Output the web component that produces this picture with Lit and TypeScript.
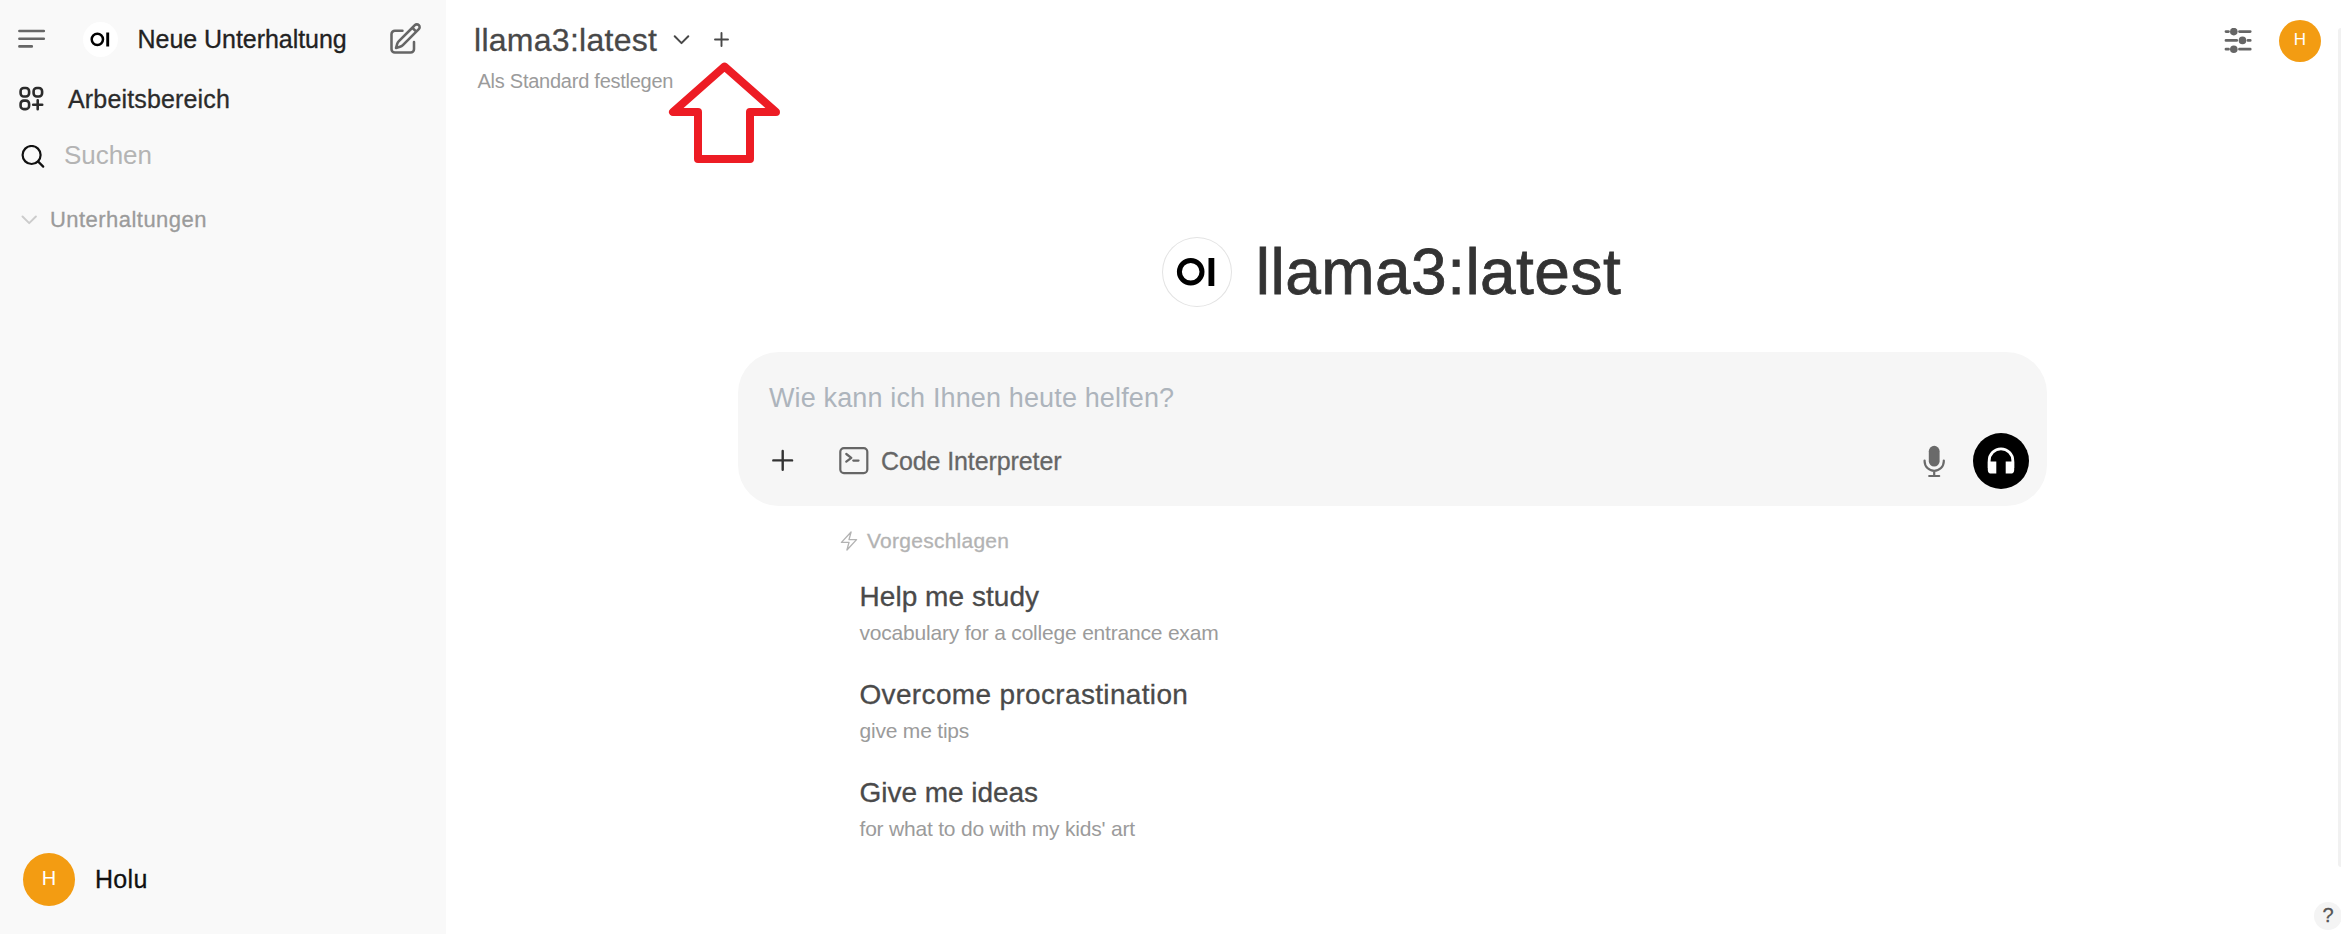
import { LitElement, html, css, svg } from "lit";
import { customElement } from "lit/decorators.js";

const shared = css`
  * { box-sizing: border-box; }
  svg { display: block; flex: none; fill: none; stroke: currentColor; stroke-linecap: round; stroke-linejoin: round; }
  .medium { -webkit-text-stroke: 0.3px currentColor; }
  .avatar { display: flex; align-items: center; justify-content: center; flex: none; border-radius: 50%; background: #f39c12; color: #fff; }
`;

const logo = svg`<circle cx="28.7" cy="34.7" r="11.3" stroke="#000" stroke-width="5"/><path d="M49.4 21v28" stroke="#000" stroke-width="5.8" stroke-linecap="butt"/>`;

@customElement("side-bar")
export class SideBar extends LitElement {
  static styles = [shared, css`
    :host { display: flex; flex-direction: column; flex: none; width: 446px; height: 934px; padding: 9px 0 28px; background: #f9f9f9; color: #242424; font-size: 25px; }
    .row { display: flex; align-items: center; height: 60px; white-space: nowrap; }
    .new { padding: 0 23.5px 0 18px; color: #666; }
    .badge { display: flex; align-items: center; justify-content: center; width: 35px; height: 35px; margin: 0 19.5px 0 37px; border-radius: 50%; background: #fff; }
    .new-label { flex: 1; color: #222; letter-spacing: -0.04px; }
    .space { padding-left: 18px; gap: 23px; letter-spacing: 0.16px; color: #2b2b2b; }
    .search { height: 56px; padding-left: 20px; gap: 19px; color: #111; }
    .search-label { color: #b4b4b4; margin-top: -3px; font-size: 26px; letter-spacing: -0.05px; }
    .chats { height: 70px; padding-left: 21px; gap: 13px; color: #ccc; }
    .chats-label { color: #9b9b9b; font-size: 22px; letter-spacing: 0.46px; }
    .user { height: 53px; margin-top: auto; padding-left: 23px; gap: 20px; color: #111; letter-spacing: 0.3px; }
    .avatar { width: 52px; height: 53px; font-size: 20px; letter-spacing: 0; padding-bottom: 3px; }
  `];
  render() {
    return html`
      <div class="row new">
        <svg width="28" height="24" viewBox="0 0 28 24" stroke-width="2.6"><path d="M1.4 4h24.4M1.4 11.7h24.4M1.4 19.4h12.4"/></svg>
        <div class="badge"><svg width="35" height="35" viewBox="0 0 70 70">${logo}</svg></div>
        <span class="new-label medium">Neue Unterhaltung</span>
        <svg width="36" height="36" viewBox="0 0 24 24" stroke-width="1.7"><path d="m16.862 4.487 1.687-1.688a1.875 1.875 0 1 1 2.652 2.652L10.582 16.07a4.5 4.5 0 0 1-1.897 1.13L6 18l.8-2.685a4.5 4.5 0 0 1 1.13-1.897l8.932-8.931Zm0 0L19.5 7.125M18 14v4.75A2.25 2.25 0 0 1 15.75 21H5.25A2.25 2.25 0 0 1 3 18.75V8.75A2.25 2.25 0 0 1 5.25 6.5H10.3"/></svg>
      </div>
      <div class="row space">
        <svg width="27" height="26" viewBox="0 0 27 26" stroke-width="2.6"><rect x="2.6" y="2" width="8.5" height="8.5" rx="3.2"/><rect x="15.6" y="2" width="8.5" height="8.5" rx="3.2"/><rect x="2.6" y="14.6" width="8.5" height="8.5" rx="3.2"/><path d="M15.2 18.8h9M19.7 14.3v9"/></svg>
        <span class="medium">Arbeitsbereich</span>
      </div>
      <div class="row search">
        <svg width="25" height="24" viewBox="0 0 25 24" stroke-width="2.2"><circle cx="11.6" cy="10" r="9"/><path d="m18.2 16.6 5 5"/></svg>
        <span class="search-label">Suchen</span>
      </div>
      <div class="row chats">
        <svg width="16" height="10" viewBox="0 0 16 10" stroke-width="1.9"><path d="m1.5 1.5 6.7 6.7 6.7-6.7"/></svg>
        <span class="chats-label medium">Unterhaltungen</span>
      </div>
      <div class="row user"><div class="avatar">H</div><span class="medium">Holu</span></div>
    `;
  }
}

@customElement("top-bar")
export class TopBar extends LitElement {
  static styles = [shared, css`
    :host { display: flex; justify-content: space-between; height: 110px; padding: 20px 20px 0 28px; white-space: nowrap; }
    .pick { display: flex; align-items: center; height: 40px; color: #484848; }
    .name { font-size: 32px; letter-spacing: 0.27px; margin-right: 15.5px; }
    .add { margin-left: 23px; }
    .sub { margin: 8px 0 0 3.5px; font-size: 20px; line-height: 26px; letter-spacing: -0.25px; color: #9b9b9b; }
    .right { display: flex; align-items: center; height: 42px; gap: 27px; color: #666; }
    .avatar { width: 42px; height: 42px; font-size: 17px; padding-bottom: 2px; }
  `];
  render() {
    return html`
      <div>
        <div class="pick">
          <span class="name medium">llama3:latest</span>
          <svg width="17" height="12" viewBox="0 0 17 12" stroke-width="2"><path d="m1.7 2.3 6.8 6.8 6.8-6.8"/></svg>
          <svg class="add" width="17" height="16" viewBox="0 0 17 16" stroke-width="1.9"><path d="M2 7.5h13M8.5 1v13"/></svg>
        </div>
        <div class="sub">Als Standard festlegen</div>
      </div>
      <div class="right">
        <svg width="28" height="26" viewBox="0 0 28 26" stroke-width="2.8"><path d="M2 3.6h2.5M15.5 3.6h10.7M2 12.4h10.7M24 12.4h2.2M2 21.2h2.5M15.5 21.2h10.7"/><g fill="currentColor" stroke="none"><circle cx="9.8" cy="3.6" r="3.8"/><circle cx="18.5" cy="12.4" r="3.8"/><circle cx="9.8" cy="21.2" r="3.8"/></g></svg>
        <div class="avatar">H</div>
      </div>
    `;
  }
}

@customElement("prompt-box")
export class PromptBox extends LitElement {
  static styles = [shared, css`
    :host { display: flex; flex-direction: column; width: 1309px; height: 154px; padding: 26px 18px 17px 31px; border-radius: 41px; background: #f6f6f6; white-space: nowrap; }
    .hint { font-size: 27px; line-height: 40px; letter-spacing: 0.14px; color: #adb4bc; }
    .tools { display: flex; align-items: center; height: 56px; margin-top: 15px; color: #333; }
    .code { display: flex; align-items: center; flex: 1; margin-left: 45px; gap: 12px; color: #666; font-size: 25px; letter-spacing: -0.1px; }
    .mic { color: #6a6a6a; }
    .call { display: flex; align-items: center; justify-content: center; width: 56px; height: 56px; margin-left: 27px; border-radius: 50%; background: #000; color: #fff; }
  `];
  render() {
    return html`
      <div class="hint">Wie kann ich Ihnen heute helfen?</div>
      <div class="tools">
        <svg width="25" height="24" viewBox="0 0 25 24" stroke-width="2.4"><path d="M4.3 11.4h18.8M13.7 2v18.8"/></svg>
        <div class="code">
          <svg width="30" height="28" viewBox="0 0 30 28" stroke-width="2.2"><rect x="1.3" y="1.1" width="27" height="25" rx="3.6"/><path d="m7.3 7 5 3.8-5 3.8M14.3 13.6h5.2" stroke-width="2.3"/></svg>
          <span class="medium">Code Interpreter</span>
        </div>
        <svg class="mic" width="24" height="34" viewBox="0 0 24 34" stroke-width="2.2"><rect x="6.8" y="1.8" width="10.8" height="20.8" rx="5.4" fill="currentColor" stroke="none"/><path d="M2.6 16.5v.8a9.6 9.6 0 0 0 19.2 0v-.8M12.2 27v5M7.2 32h10"/></svg>
        <div class="call"><svg width="30" height="30" viewBox="0 0 30 30"><path d="M3.2 22v-7.4a11.8 11.8 0 0 1 23.6 0V22" stroke-width="2.8" stroke-linecap="butt"/><path d="M1.8 15.4h8.5v12.2H5.5q-3.7 0-3.7-3.7zM19.7 15.4h8.5v8.5q0 3.7-3.7 3.7h-4.8z" fill="currentColor" stroke="none"/></svg></div>
      </div>
    `;
  }
}

const ideas = [
  { title: "Help me study", text: "vocabulary for a college entrance exam", key: "study" },
  { title: "Overcome procrastination", text: "give me tips", key: "overcome" },
  { title: "Give me ideas", text: "for what to do with my kids' art", key: "creative" },
];

@customElement("idea-list")
export class IdeaList extends LitElement {
  static styles = [shared, css`
    :host { display: block; width: 1309px; padding: 20px 0 0 100px; white-space: nowrap; }
    .head { display: flex; align-items: center; gap: 7px; height: 30px; color: #b3b3b3; font-size: 21px; letter-spacing: 0.25px; }
    .idea { display: flex; flex-direction: column; margin-left: 21.5px; height: 98px; }
    .ideas { padding-top: 22px; }
    .title { font-size: 28px; line-height: 38px; color: #4a4a4a; }
    .text { font-size: 21px; line-height: 34px; letter-spacing: -0.2px; color: #9b9b9b; }
    .study { letter-spacing: 0.05px; }
    .overcome { letter-spacing: 0.34px; }
    .creative { letter-spacing: -0.03px; }
  `];
  render() {
    return html`
      <div class="head"><svg width="22" height="22" viewBox="0 0 24 24" stroke-width="1.5"><path d="m3.75 13.5 10.5-11.25L12 10.5h8.25L9.75 21.75 12 13.5H3.75z"/></svg><span class="medium">Vorgeschlagen</span></div>
      <div class="ideas">
        ${ideas.map((i) => html`<div class="idea"><span class="title medium ${i.key}">${i.title}</span><span class="text">${i.text}</span></div>`)}
      </div>
    `;
  }
}

@customElement("app-root")
export class AppRoot extends LitElement {
  static styles = [shared, css`
    :host { display: flex; position: relative; width: 2341px; height: 934px; overflow: hidden; background: #fff; font-family: "Liberation Sans", Arial, sans-serif; }
    main { flex: 1; min-width: 0; }
    .center { display: flex; flex-direction: column; align-items: center; padding: 127px 2px 0 0; }
    .hero { display: flex; align-items: center; height: 70px; margin-bottom: 45px; gap: 24px; color: #333; white-space: nowrap; padding-right: 2px; }
    .ring { width: 70px; height: 70px; border-radius: 50%; box-shadow: inset 0 0 0 1px #e3e3e3; }
    .hero-name { font-size: 64px; line-height: 70px; letter-spacing: 0.46px; }
    .big { -webkit-text-stroke: 0.8px currentColor; }
    .arrow { position: absolute; left: 665px; top: 58px; }
    .scroll { position: absolute; right: 0; top: 28px; width: 3px; height: 839px; border-radius: 3px 0 0 3px; background: #f1f1f1; }
    .help { position: absolute; left: 2314px; top: 902px; width: 28px; height: 28px; border-radius: 50%; background: #f4f4f4; color: #555; font-size: 20px; line-height: 27px; text-align: center; }
  `];
  render() {
    return html`
      <side-bar></side-bar>
      <main>
        <top-bar></top-bar>
        <div class="center">
          <div class="hero"><div class="ring"><svg width="70" height="70" viewBox="0 0 70 70">${logo}</svg></div><span class="hero-name big">llama3:latest</span></div>
          <prompt-box></prompt-box>
          <idea-list></idea-list>
        </div>
      </main>
      <svg class="arrow" width="120" height="110" viewBox="0 0 120 110" stroke-width="8"><path d="M59.5 8.6 8 54H33v47h52V54h26z" stroke="#ed1c24"/></svg>
      <div class="scroll"></div>
      <div class="help medium">?</div>
    `;
  }
}
